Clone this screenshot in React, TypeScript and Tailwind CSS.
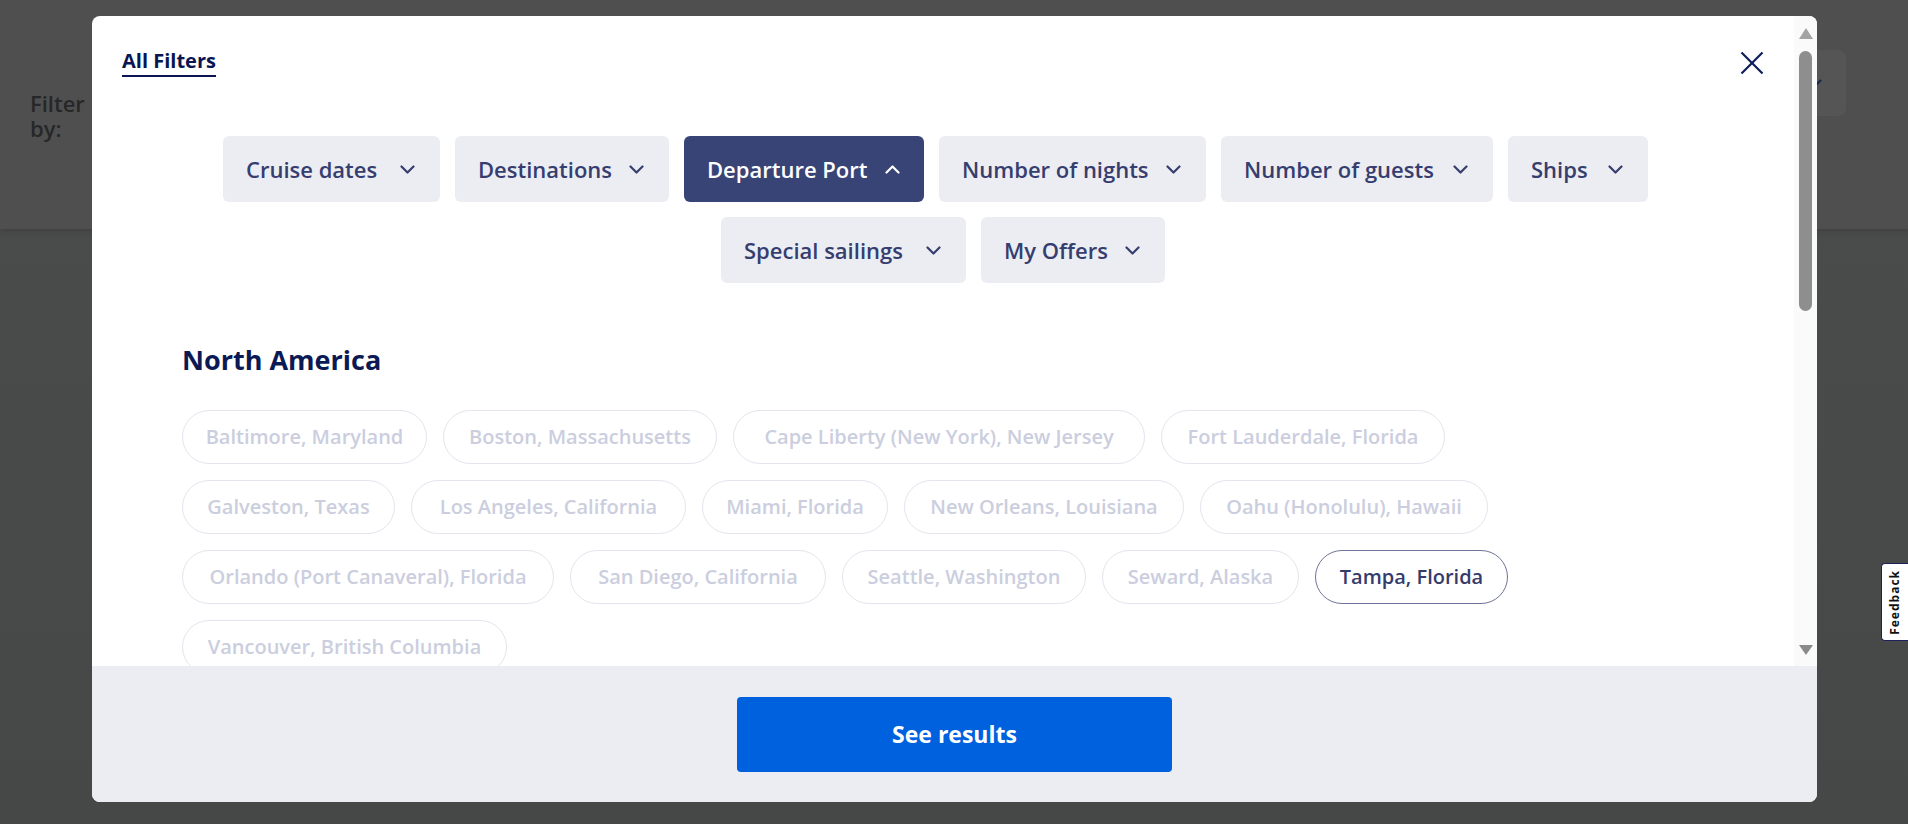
import React from "react";

type Chip = { label: string; w: string; active?: boolean };

const chipsRow1: Chip[] = [
  { label: "Cruise dates", w: "w-[217px]" },
  { label: "Destinations", w: "w-[214px]" },
  { label: "Departure Port", w: "w-[240px]", active: true },
  { label: "Number of nights", w: "w-[267px]" },
  { label: "Number of guests", w: "w-[272px]" },
  { label: "Ships", w: "w-[140px]" },
];

const chipsRow2: Chip[] = [
  { label: "Special sailings", w: "w-[245px]" },
  { label: "My Offers", w: "w-[184px]" },
];

type Pill = { label: string; w: string; active?: boolean };

const pillRows: Pill[][] = [
  [
    { label: "Baltimore, Maryland", w: "w-[245px]" },
    { label: "Boston, Massachusetts", w: "w-[274px]" },
    { label: "Cape Liberty (New York), New Jersey", w: "w-[412px]" },
    { label: "Fort Lauderdale, Florida", w: "w-[284px]" },
  ],
  [
    { label: "Galveston, Texas", w: "w-[213px]" },
    { label: "Los Angeles, California", w: "w-[275px]" },
    { label: "Miami, Florida", w: "w-[186px]" },
    { label: "New Orleans, Louisiana", w: "w-[280px]" },
    { label: "Oahu (Honolulu), Hawaii", w: "w-[288px]" },
  ],
  [
    { label: "Orlando (Port Canaveral), Florida", w: "w-[372px]" },
    { label: "San Diego, California", w: "w-[256px]" },
    { label: "Seattle, Washington", w: "w-[244px]" },
    { label: "Seward, Alaska", w: "w-[197px]" },
    { label: "Tampa, Florida", w: "w-[193px]", active: true },
  ],
  [{ label: "Vancouver, British Columbia", w: "w-[325px]" }],
];

function Chevron({ up, color }: { up?: boolean; color: string }) {
  return (
    <svg width="15" height="9" viewBox="0 0 15 9" fill="none" className="shrink-0">
      <polyline
        points={up ? "1.5,7.5 7.5,1.5 13.5,7.5" : "1.5,1.5 7.5,7.5 13.5,1.5"}
        stroke={color}
        strokeWidth="2.2"
        strokeLinecap="round"
        strokeLinejoin="round"
      />
    </svg>
  );
}

function FilterChip({ chip }: { chip: Chip }) {
  return (
    <div
      className={
        chip.active
          ? `flex h-[66px] ${chip.w} items-center justify-between rounded-[6px] bg-[#384476] pl-[23px] pr-[24px] text-[22px] font-semibold text-white`
          : `flex h-[66px] ${chip.w} items-center justify-between rounded-[6px] bg-[#ecedf2] pl-[23px] pr-[25px] text-[22px] font-semibold text-[#363d6f]`
      }
    >
      <span className="whitespace-nowrap">{chip.label}</span>
      <Chevron up={chip.active} color={chip.active ? "#ffffff" : "#363d6f"} />
    </div>
  );
}

function PortPill({ pill }: { pill: Pill }) {
  return (
    <div
      className={
        pill.active
          ? `flex h-[54px] ${pill.w} items-center justify-center whitespace-nowrap rounded-full border border-[#6e7398] text-[20px] font-semibold text-[#353c6c]`
          : `flex h-[54px] ${pill.w} items-center justify-center whitespace-nowrap rounded-full border border-[#e4e5ee] text-[20px] font-semibold text-[#cbcede]`
      }
    >
      {pill.label}
    </div>
  );
}

export default function App() {
  return (
    <div className="relative h-[824px] w-full overflow-hidden bg-linear-to-b from-[#4b4c4c] to-[#464747] font-['Open_Sans',sans-serif]">
      {/* page header behind the overlay */}
      <header className="flex h-[229px] items-start justify-between bg-[#4f4f4f] shadow-[0_3px_6px_rgba(0,0,0,0.12)]">
        <div className="pl-[30px] pt-[91px]">
          <span className="block w-[60px] text-[22px] font-semibold leading-[25px] text-[#272727]">Filter by:</span>
        </div>
        <div className="mr-[62px] mt-[50px] flex h-[66px] w-[246px] items-center justify-end rounded-[8px] bg-[#555555] pr-[24px]">
          <Chevron color="#1e2748" />
        </div>
      </header>

      {/* modal */}
      <div className="absolute left-[92px] top-[16px] flex h-[786px] w-[1725px] flex-col overflow-hidden rounded-[8px] bg-white">
        <div className="flex h-[650px] shrink-0">
          <div className="flex-1 overflow-hidden">
            <div className="flex items-start justify-between px-[30px] pt-[35px]">
              <span className="border-b-2 border-[#0a1551] pb-[4px] text-[20px] font-bold leading-[20px] text-[#0a1551]">
                All Filters
              </span>
              <svg width="24" height="24" viewBox="0 0 24 24" fill="none">
                <line x1="1.5" y1="1.5" x2="22.5" y2="22.5" stroke="#0c1b57" strokeWidth="2.2" />
                <line x1="22.5" y1="1.5" x2="1.5" y2="22.5" stroke="#0c1b57" strokeWidth="2.2" />
              </svg>
            </div>

            <div className="mt-[59px] flex flex-col items-center gap-[15px]">
              <div className="flex gap-[15px] pr-[15px]">
                {chipsRow1.map((c) => (
                  <FilterChip key={c.label} chip={c} />
                ))}
              </div>
              <div className="flex gap-[15px]">
                {chipsRow2.map((c) => (
                  <FilterChip key={c.label} chip={c} />
                ))}
              </div>
            </div>

            <div className="pl-[90px]">
              <h2 className="mt-[63px] text-[27px] font-bold leading-[28px] text-[#0b1a54]">North America</h2>
              <div className="mt-[36px] flex flex-col gap-[16px]">
                {pillRows.map((row, i) => (
                  <div key={i} className="flex gap-[16px]">
                    {row.map((p) => (
                      <PortPill key={p.label} pill={p} />
                    ))}
                  </div>
                ))}
              </div>
            </div>
          </div>

          {/* scrollbar */}
          <div className="flex w-[23px] flex-col items-center bg-[#fafafa] pb-[11px] pt-[12px]">
            <svg width="14" height="11" viewBox="0 0 14 11">
              <polygon points="7,0 14,11 0,11" fill="#a3a3a3" />
            </svg>
            <div className="mt-[12px] h-[260px] w-[13px] rounded-full bg-[#8e8e8e]" />
            <div className="flex-1" />
            <svg width="14" height="10" viewBox="0 0 14 10">
              <polygon points="0,0 14,0 7,10" fill="#8a8a8a" />
            </svg>
          </div>
        </div>

        <div className="flex flex-1 items-center justify-center bg-[#ecedf2]">
          <button className="h-[75px] w-[435px] rounded-[4px] bg-[#0061df] text-[23px] font-bold text-white">
            See results
          </button>
        </div>
      </div>

      {/* feedback tab */}
      <div className="absolute right-0 top-[563px] flex h-[78px] w-[27px] items-center justify-center rounded-l-[4px] border border-r-0 border-[#1c2257] bg-white">
        <span className="rotate-180 text-[12px] font-bold tracking-[1px] text-[#111111] [writing-mode:vertical-rl]">
          Feedback
        </span>
      </div>
    </div>
  );
}
